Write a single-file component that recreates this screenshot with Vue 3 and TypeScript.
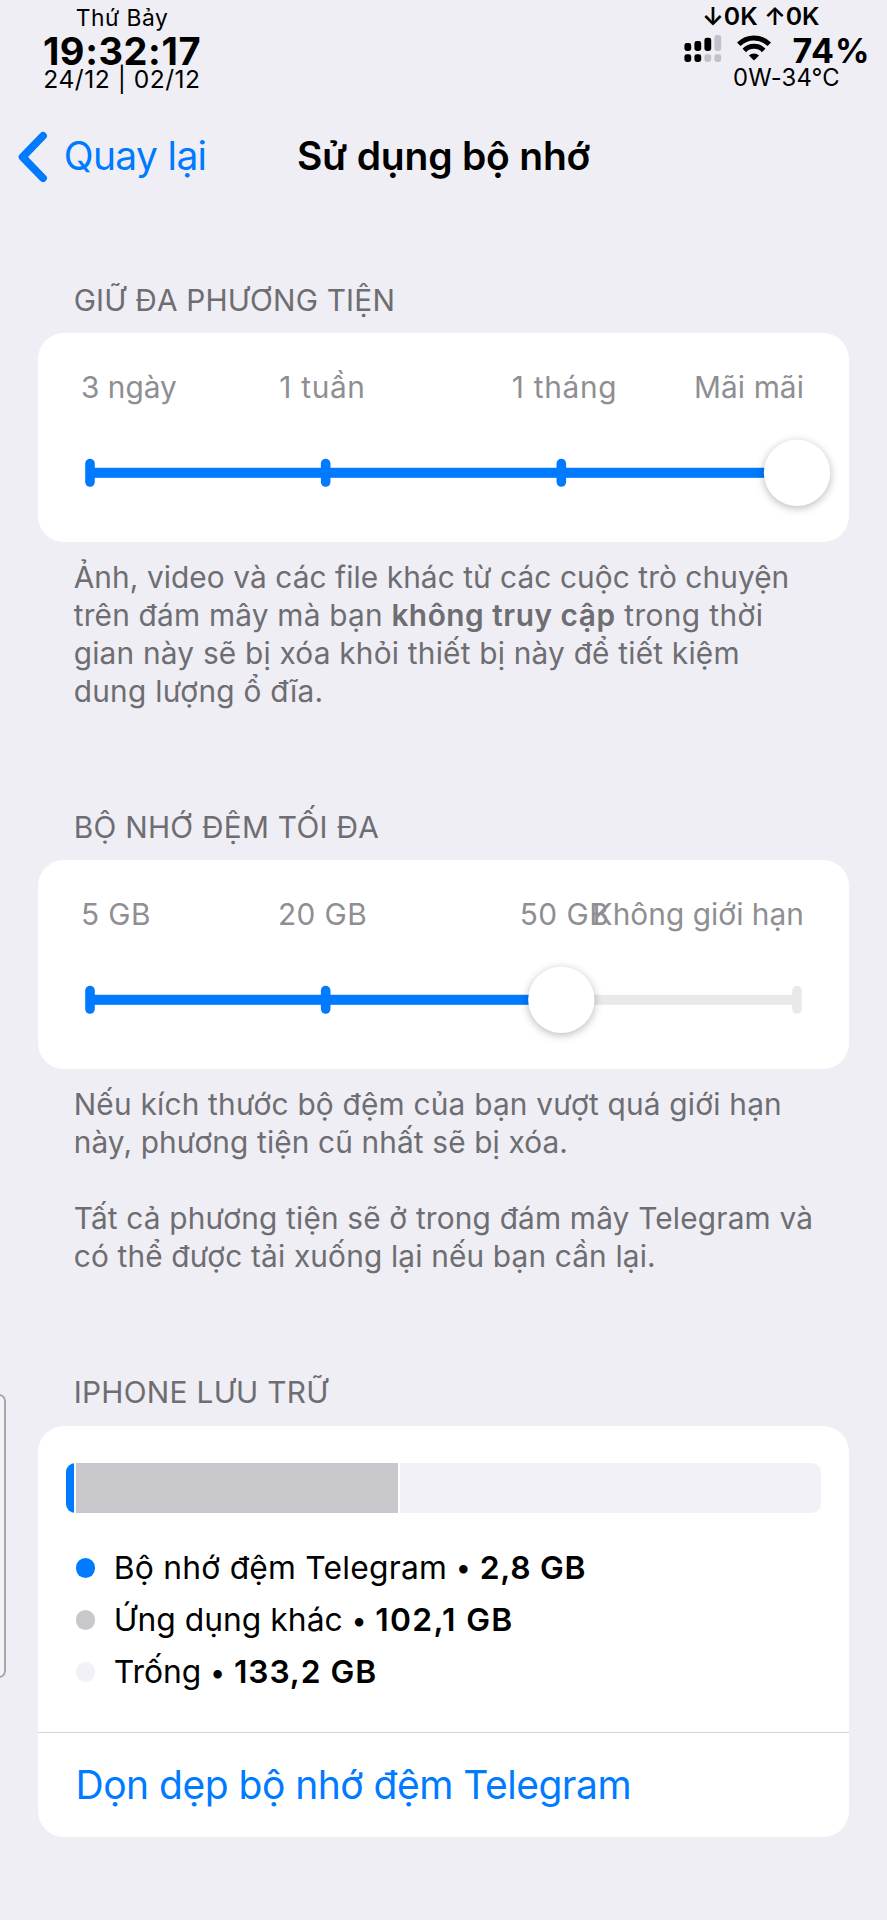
<script setup lang="ts">
interface Run { text: string; tracking: number; bold?: boolean }
interface SliderSection {
  title: Run
  labels: Run[]
  value: number
  notes: Run[][]
}
interface Usage { name: Run; size: Run; color: string }

const sections: SliderSection[] = [
  {
    title: { text: 'GIỮ ĐA PHƯƠNG TIỆN', tracking: 0.2 },
    labels: [
      { text: '3 ngày', tracking: 0 },
      { text: '1 tuần', tracking: 0.68 },
      { text: '1 tháng', tracking: 0.7 },
      { text: 'Mãi mãi', tracking: 0.1 },
    ],
    value: 3,
    notes: [
      [{ text: 'Ảnh, video và các file khác từ các cuộc trò chuyện', tracking: 0.09 }],
      [
        { text: 'trên đám mây mà bạn ', tracking: 0.22 },
        { text: 'không truy cập', tracking: 0.53, bold: true },
        { text: ' trong thời', tracking: 0.4 },
      ],
      [{ text: 'gian này sẽ bị xóa khỏi thiết bị này để tiết kiệm', tracking: 0.22 }],
      [{ text: 'dung lượng ổ đĩa.', tracking: 0.27 }],
    ],
  },
  {
    title: { text: 'BỘ NHỚ ĐỆM TỐI ĐA', tracking: 0.28 },
    labels: [
      { text: '5 GB', tracking: 0.4 },
      { text: '20 GB', tracking: 0.4 },
      { text: '50 GB', tracking: 0.5 },
      { text: 'Không giới hạn', tracking: 0.06 },
    ],
    value: 2,
    notes: [
      [{ text: 'Nếu kích thước bộ đệm của bạn vượt quá giới hạn', tracking: 0.22 }],
      [{ text: 'này, phương tiện cũ nhất sẽ bị xóa.', tracking: 0.14 }],
      [],
      [{ text: 'Tất cả phương tiện sẽ ở trong đám mây Telegram và', tracking: 0.19 }],
      [{ text: 'có thể được tải xuống lại nếu bạn cần lại.', tracking: 0.17 }],
    ],
  },
]

const usage: Usage[] = [
  { name: { text: 'Bộ nhớ đệm Telegram', tracking: 0.22 }, size: { text: '2,8 GB', tracking: 0.7 }, color: '#007aff' },
  { name: { text: 'Ứng dụng khác', tracking: 0.03 }, size: { text: '102,1 GB', tracking: 1.3 }, color: '#c7c7cc' },
  { name: { text: 'Trống', tracking: 0 }, size: { text: '133,2 GB', tracking: 0.9 }, color: '#f2f1f7' },
]

const segments = [
  { color: '#007aff', width: 7.5 },
  { color: '#c7c7cc', width: 321.5 },
  { color: '#f2f1f7', width: 421 },
]

const ACTIVE = '#007aff'
const INACTIVE = '#e9e9e9'
const stop = (i: number) => 52 + i * 235.67
const spaced = (r: Run) => ({ letterSpacing: `${r.tracking}px` })
</script>

<template>
  <main class="screen">
    <div class="drawer-handle"></div>

    <header class="status">
      <div class="clock">
        <span class="day">Thứ Bảy</span>
        <span class="time">19:32:17</span>
        <span class="date">24/12 | 02/12</span>
      </div>
      <div class="device">
        <span class="traffic">↓0K ↑0K</span>
        <div class="signals">
          <svg class="bars" width="38" height="28" viewBox="0 0 38 28">
            <g fill="#000">
              <rect x="0.4" y="8" width="6.8" height="8" rx="2.4" />
              <rect x="10.4" y="6" width="6.8" height="10" rx="2.4" />
              <rect x="20.4" y="2.7" width="6.8" height="13.3" rx="2.4" />
              <rect x="0.4" y="19.2" width="6.8" height="7.8" rx="2.4" />
              <rect x="10.4" y="19.2" width="6.8" height="7.8" rx="2.4" />
            </g>
            <g fill="#c2c1c7">
              <rect x="30.4" y="0" width="6.8" height="16" rx="2.4" />
              <rect x="20.4" y="19.2" width="6.8" height="7.8" rx="2.4" />
              <rect x="30.4" y="19.2" width="6.8" height="7.8" rx="2.4" />
            </g>
          </svg>
          <svg class="wifi" width="34" height="26" viewBox="0 0 34 26">
            <g fill="none" stroke="#000" stroke-width="5">
              <path d="M1.7 9.3A21.6 21.6 0 0 1 32.3 9.3" />
              <path d="M7.3 15.4A13.7 13.7 0 0 1 26.7 15.4" />
            </g>
            <path d="M17 25.6L11.9 20.5A7.2 7.2 0 0 1 22.1 20.5Z" fill="#000" />
          </svg>
          <span class="battery">74%</span>
        </div>
        <span class="power">0W-34°C</span>
      </div>
    </header>

    <nav class="nav">
      <div class="back">
        <svg class="chevron" width="30" height="52" viewBox="0 0 30 52">
          <path d="M25 4.9L4.6 26L25 47.1" fill="none" stroke="#007aff" stroke-width="7.8" stroke-linecap="round" stroke-linejoin="round" />
        </svg>
        <span class="back-label">Quay lại</span>
      </div>
      <h1 class="title">Sử dụng bộ nhớ</h1>
    </nav>

    <section v-for="s in sections" :key="s.title.text" class="section">
      <h2 class="heading" :style="spaced(s.title)">{{ s.title.text }}</h2>
      <div class="card slider-card">
        <div class="labels">
          <span v-for="l in s.labels" :key="l.text" class="label" :style="spaced(l)">{{ l.text }}</span>
        </div>
        <svg class="slider" width="811" height="100" viewBox="0 0 811 100">
          <rect :x="stop(0)" y="44.8" :width="stop(3) - stop(0)" height="10" :fill="INACTIVE" />
          <rect :x="stop(0)" y="44.8" :width="stop(s.value) - stop(0)" height="10" :fill="ACTIVE" />
          <rect
            v-for="i in 4"
            :key="i"
            :x="stop(i - 1) - 4.8"
            y="35.8"
            width="9.6"
            height="28"
            rx="4.8"
            :fill="i - 1 <= s.value ? ACTIVE : INACTIVE"
          />
          <circle class="knob" :cx="stop(s.value)" cy="49.8" r="33.2" />
        </svg>
      </div>
      <div class="notes">
        <p v-for="(line, n) in s.notes" :key="n" class="line"><span v-for="r in line" :key="r.text" :class="{ strong: r.bold }" :style="spaced(r)">{{ r.text }}</span></p>
      </div>
    </section>

    <section class="section">
      <h2 class="heading storage-heading">IPHONE LƯU TRỮ</h2>
      <div class="card">
        <div class="meter">
          <div v-for="g in segments" :key="g.color" class="segment" :style="{ flexGrow: g.width, background: g.color }"></div>
        </div>
        <ul class="legend">
          <li v-for="u in usage" :key="u.name.text" class="entry">
            <i class="dot" :style="{ background: u.color }"></i>
            <span :style="spaced(u.name)">{{ u.name.text }}</span>
            <span class="bullet">•</span>
            <b class="size" :style="spaced(u.size)">{{ u.size.text }}</b>
          </li>
        </ul>
        <button class="clear" type="button">Dọn dẹp bộ nhớ đệm Telegram</button>
      </div>
    </section>
  </main>
</template>

<style>
body {
  margin: 0;
  background: #efeef4;
}
</style>

<style scoped>
.screen {
  position: relative;
  box-sizing: border-box;
  width: 887px;
  height: 1920px;
  overflow: hidden;
  background: #efeef4;
  color: #000;
  font-family: Inter, "Liberation Sans", sans-serif;
  white-space: nowrap;
}
.drawer-handle {
  position: absolute;
  left: -12px;
  top: 1394px;
  box-sizing: border-box;
  width: 18px;
  height: 284px;
  border: 2px solid #a9a9ac;
  border-radius: 7px;
  background: #f3f3f5;
}
.status {
  display: flex;
  justify-content: space-between;
  height: 110px;
}
.clock {
  display: flex;
  flex-direction: column;
  align-items: center;
  width: 244px;
}
.day {
  font-size: 22.8px;
  line-height: 35.6px;
  letter-spacing: 0.5px;
}
.time {
  font-size: 38px;
  font-weight: 700;
  line-height: 30.2px;
  letter-spacing: 0.6px;
}
.date {
  font-size: 24.6px;
  line-height: 26.8px;
  letter-spacing: 0.5px;
}
.device {
  display: flex;
  flex-direction: column;
  width: 203px;
}
.traffic {
  margin-left: 18px;
  font-size: 24.8px;
  font-weight: 600;
  line-height: 32.6px;
  letter-spacing: 0;
}
.signals {
  display: flex;
  height: 35.6px;
}
.bars {
  margin-top: 2px;
}
.wifi {
  margin: 2.4px 22px 0 14.5px;
}
.battery {
  font-size: 34px;
  font-weight: 700;
  line-height: 35.6px;
  letter-spacing: 0.8px;
}
.power {
  margin-left: 49px;
  font-size: 23.8px;
  line-height: 20.4px;
  letter-spacing: 0.2px;
}
.nav {
  display: grid;
  grid-template-columns: 1fr auto 1fr;
  align-items: center;
  height: 92px;
}
.back {
  display: flex;
  align-items: center;
  color: #007aff;
}
.chevron {
  margin: 1px 15.5px 0 18.3px;
}
.back-label {
  padding-top: 0.5px;
  font-size: 39px;
  line-height: 48px;
  letter-spacing: -0.66px;
}
.title {
  margin: 0;
  font-size: 39px;
  font-weight: 600;
  line-height: 48px;
  letter-spacing: -0.2px;
}
.section {
  margin: 98.1px 38px 0;
}
.nav + .section {
  margin-top: 78.9px;
}
.heading {
  margin: 0 0 14.5px;
  padding-left: 35.7px;
  color: #6d6d72;
  font-size: 29.8px;
  font-weight: 400;
  line-height: 38px;
}
.storage-heading {
  margin-bottom: 14.8px;
  letter-spacing: 0.3px;
}
.card {
  overflow: hidden;
  border-radius: 26px;
  background: #fff;
}
.slider-card {
  height: 208.4px;
}
.labels {
  display: grid;
  grid-template-columns: 160px 163px 321px 79px;
  padding: 34.9px 0 0 43px;
  color: #8e8e93;
  font-size: 29.8px;
  line-height: 38px;
}
.label:nth-child(2),
.label:nth-child(3) {
  justify-self: center;
}
.label:last-child {
  justify-self: end;
}
.slider {
  display: block;
  margin-top: 17px;
}
.knob {
  fill: #fff;
  filter: drop-shadow(0 2.5px 4px rgba(0, 0, 0, 0.28));
}
.notes {
  margin-top: 16px;
  padding-left: 35.7px;
  color: #6d6d72;
  font-size: 29.8px;
  line-height: 38px;
}
.line {
  height: 38px;
  margin: 0;
  white-space: pre;
}
.strong {
  font-weight: 600;
}
.meter {
  display: flex;
  gap: 2.5px;
  height: 49.5px;
  margin: 37.8px 28px 0;
  overflow: hidden;
  border-radius: 9px;
}
.segment {
  flex-basis: 0;
}
.legend {
  margin: 29px 0 0;
  padding: 0 0 34px 37.7px;
  list-style: none;
}
.entry {
  display: flex;
  align-items: center;
  height: 52.1px;
  font-size: 31.8px;
  line-height: 52.1px;
}
.dot {
  width: 19.5px;
  height: 19.5px;
  margin-right: 18.6px;
  border-radius: 50%;
}
.bullet {
  width: 32.6px;
  padding-top: 1px;
  font-size: 27px;
  text-align: center;
}
.size {
  font-weight: 600;
}
.clear {
  display: block;
  width: 100%;
  height: 104.5px;
  padding: 1px 0 0 37.5px;
  border: 0;
  border-top: 1px solid #d3d3d6;
  background: none;
  color: #007aff;
  font: 400 39px/48px Inter, "Liberation Sans", sans-serif;
  letter-spacing: -0.5px;
  text-align: left;
}
</style>
